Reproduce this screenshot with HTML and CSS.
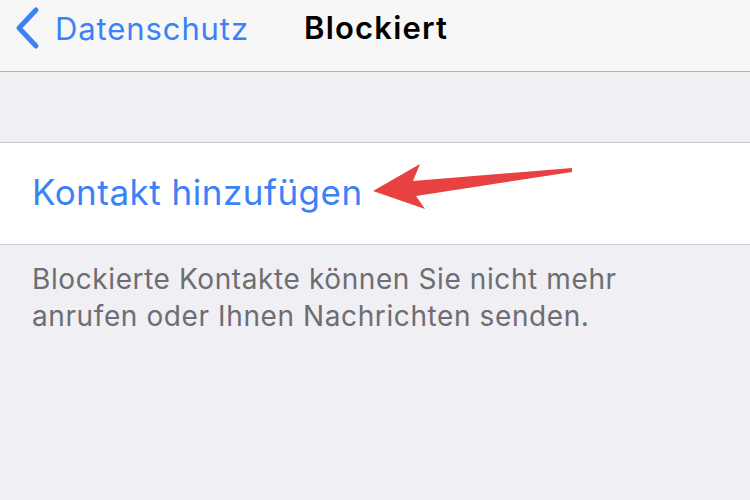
FILE: index.html
```html
<!DOCTYPE html>
<html>
<head>
  <meta name="viewport" content="width=device-width, initial-scale=1">
  <title>Blockiert</title>
  <link rel="stylesheet" href="styles.css">
</head>
<body>
  <div id="navbar">
    <a class="back" href="#">
      <svg class="chevron" width="30" height="44" viewBox="0 0 30 44">
        <polyline points="24,4 7,22 24,40" fill="none" stroke="#3a82f6" stroke-width="5" stroke-linecap="round" stroke-linejoin="round"/>
      </svg>
      <span>Datenschutz</span>
    </a>
    <h1 class="nav-title">Blockiert</h1>
  </div>

  <div class="section-gap"></div>

  <div class="cell-group">
    <div class="cell">
      <span class="cell-action">Kontakt hinzufügen</span>
    </div>
  </div>

  <p class="section-footer">Blockierte Kontakte können Sie nicht mehr anrufen oder Ihnen Nachrichten senden.</p>

  <svg class="arrow" width="750" height="500" viewBox="0 0 750 500">
    <polygon points="373,191 420,164 413,181 572,168 572,172 416,196 425,209" fill="#e84141"/>
  </svg>
</body>
</html>
```

FILE: styles.css
```css
body {
  margin: 0;
  font-family: Inter, "Noto Sans", sans-serif;
  background: #efeff4;
  width: 750px;
  height: 500px;
  overflow: hidden;
  position: relative;
}

#navbar {
  height: 72px;
  background: #f7f7f7;
  border-bottom: 1px solid #b2b2b2;
  display: flex;
  align-items: flex-start;
  padding-top: 6px;
  box-sizing: border-box;
}

.back {
  display: flex;
  align-items: center;
  color: #3a82f6;
  text-decoration: none;
  font-size: 31px;
  letter-spacing: 0.9px;
  margin-left: 12px;
  width: 292px;
}

.back span {
  margin-left: 13px;
}

.nav-title {
  margin: 0;
  font-size: 31px;
  line-height: 44px;
  font-weight: 600;
  color: #000;
  letter-spacing: 1.2px;
}

.section-gap {
  height: 70px;
}

.cell-group {
  background: #fff;
  border-top: 1px solid #c8c7cc;
  border-bottom: 1px solid #c8c7cc;
}

.cell {
  height: 101px;
  display: flex;
  align-items: center;
  padding-left: 32px;
}

.cell-action {
  color: #3a82f6;
  font-size: 35px;
  letter-spacing: 0.5px;
  margin-top: -3px;
}

.section-footer {
  margin: 16px 0 0 32px;
  width: 660px;
  color: #6d6d72;
  font-size: 28px;
  line-height: 37px;
  letter-spacing: 0.6px;
}

.arrow {
  position: absolute;
  left: 0;
  top: 0;
  pointer-events: none;
}
```
